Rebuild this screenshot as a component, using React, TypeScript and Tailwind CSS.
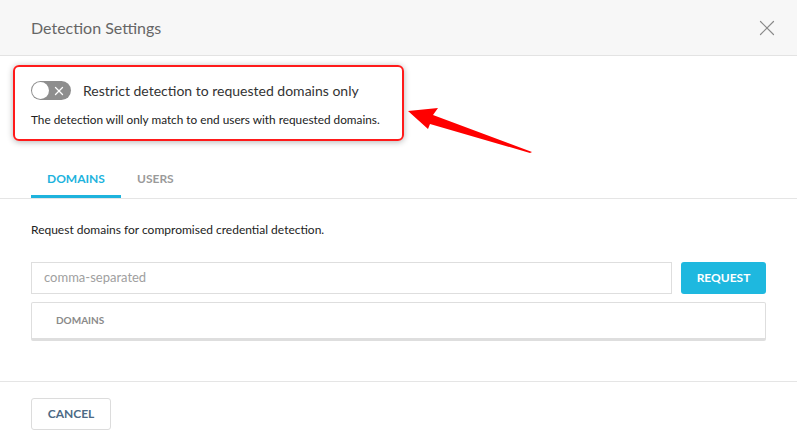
import { X } from "lucide-react"

export default function App() {
  return (
    <div className="relative w-[797px] h-[445px] bg-white overflow-hidden font-['Lato','Open_Sans',sans-serif] text-[#333]">
      {/* Header */}
      <div className="h-[56px] bg-[#f7f7f7] border-b border-[#e3e3e3] flex items-center justify-between pl-[31px] pr-[17px]">
        <h1 className="text-[16px] text-[#666] pt-[1px]">Detection Settings</h1>
        <X className="w-[26px] h-[26px] text-[#8a8a8a]" strokeWidth={1.1} />
      </div>

      {/* Restrict toggle, highlighted */}
      <div className="pt-[9px] pl-[13px]">
        <div className="w-[391px] h-[76px] border-2 border-[#ff1a1a] rounded-[6px] shadow-[0_1px_6px_rgba(0,0,0,0.3)] pl-[16px] pt-[13px]">
          <div className="flex items-center">
            <div className="w-[40px] h-[19px] rounded-full bg-[#8e8e8e] flex items-center pl-[1px]">
              <div className="w-[17px] h-[17px] rounded-full bg-white" />
              <X className="w-[14px] h-[14px] text-white ml-[3px]" strokeWidth={2.2} />
            </div>
            <span className="ml-[12px] text-[14px] text-[#333]">Restrict detection to requested domains only</span>
          </div>
          <p className="mt-[10px] text-[11.8px] text-[#222]">The detection will only match to end users with requested domains.</p>
        </div>
      </div>

      {/* Tabs */}
      <div className="mt-[23px] border-b border-[#e5e5e5] flex pl-[31px]">
        <div className="w-[90px] h-[34px] flex items-start justify-center pt-[6px] border-b-[3px] border-[#1eb3dd] text-[12px] font-bold text-[#1eb3dd]">DOMAINS</div>
        <div className="h-[34px] pt-[6px] ml-[16px] text-[12px] font-bold text-[#9a9a9a]">USERS</div>
      </div>

      {/* Body */}
      <div className="px-[31px] pt-[22px]">
        <p className="text-[12px] text-[#222]">Request domains for compromised credential detection.</p>
        <div className="mt-[23px] flex gap-[9px]">
          <div className="w-[641px] h-[32px] border border-[#dedede] flex items-center px-[12px] text-[13px] text-[#a0a0a0]">comma-separated</div>
          <button className="w-[85px] h-[32px] rounded-[3px] bg-[#1eb8df] text-white text-[12px] font-bold">REQUEST</button>
        </div>
        <div className="mt-[8px] w-[735px] h-[39px] border border-[#dedede] border-b-[3px] rounded-[2px] flex items-center pl-[24px] text-[10px] font-bold text-[#8a8a8a]">DOMAINS</div>
      </div>

      {/* Footer */}
      <div className="mt-[40px] border-t border-[#e5e5e5] pl-[31px] pt-[16px]">
        <button className="w-[80px] h-[32px] border border-[#dcdcdc] rounded-[3px] text-[12px] font-bold text-[#4d6a85]">CANCEL</button>
      </div>

      {/* Annotation arrow */}
      <svg className="absolute left-[400px] top-[100px]" width="140" height="60" viewBox="0 0 140 60">
        <polygon points="8,11 38,8 33,15 132,52 130,53 30,24 28,29" fill="#ff0000" />
      </svg>
    </div>
  )
}
